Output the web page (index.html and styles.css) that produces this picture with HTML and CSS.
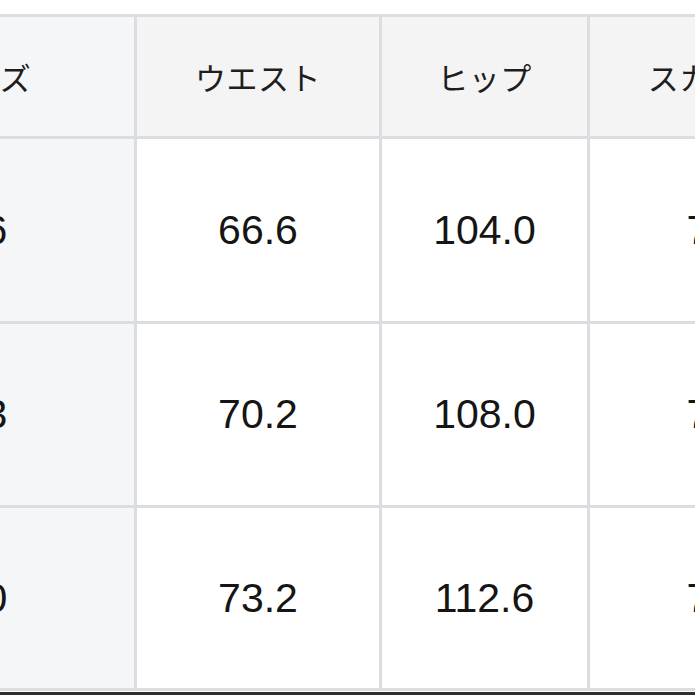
FILE: index.html
```html
<!DOCTYPE html>
<html lang="ja">
<head>
<meta charset="utf-8">
<link rel="stylesheet" href="styles.css">
</head>
<body>
<div class="page">
  <div class="table">
    <div class="cell head first">サイズ</div>
    <div class="cell head">ウエスト</div>
    <div class="cell head">ヒップ</div>
    <div class="cell head">スカート丈</div>

    <div class="cell first num">76</div>
    <div class="cell num">66.6</div>
    <div class="cell num">104.0</div>
    <div class="cell num">75.0</div>

    <div class="cell first num">73</div>
    <div class="cell num">70.2</div>
    <div class="cell num">108.0</div>
    <div class="cell num">76.0</div>

    <div class="cell first num">80</div>
    <div class="cell num">73.2</div>
    <div class="cell num">112.6</div>
    <div class="cell num">77.0</div>
  </div>
  <div class="bottom-bar"></div>
</div>
</body>
</html>
```

FILE: styles.css
```css
html, body {
  margin: 0;
  padding: 0;
  width: 695px;
  height: 695px;
  overflow: hidden;
  background: #ffffff;
}

.page {
  width: 695px;
  height: 695px;
  overflow: hidden;
  position: relative;
  padding-top: 14px;
  box-sizing: border-box;
}

.table {
  display: grid;
  grid-template-columns: 299px 242px 205px 273px;
  grid-template-rows: 119px 182px 181px 180px;
  gap: 3px;
  padding: 3px;
  background: #dcdde0;
  width: max-content;
  margin-left: -168px;
}

.cell {
  display: flex;
  align-items: center;
  justify-content: center;
  background: #ffffff;
  color: #151515;
}

.head {
  background: #f4f4f4;
  font-family: "Noto Sans CJK JP", "Noto Sans", sans-serif;
  font-size: 31px;
  font-weight: 400;
  letter-spacing: 0.5px;
  color: #1e1e1e;
}

.first {
  background: #f5f6f7;
}

.num {
  font-family: "Liberation Sans", Arial, sans-serif;
  font-size: 41px;
}

.bottom-bar {
  position: absolute;
  left: 0;
  right: 0;
  bottom: 0;
  height: 3px;
  background: #2e2e2e;
}
```
